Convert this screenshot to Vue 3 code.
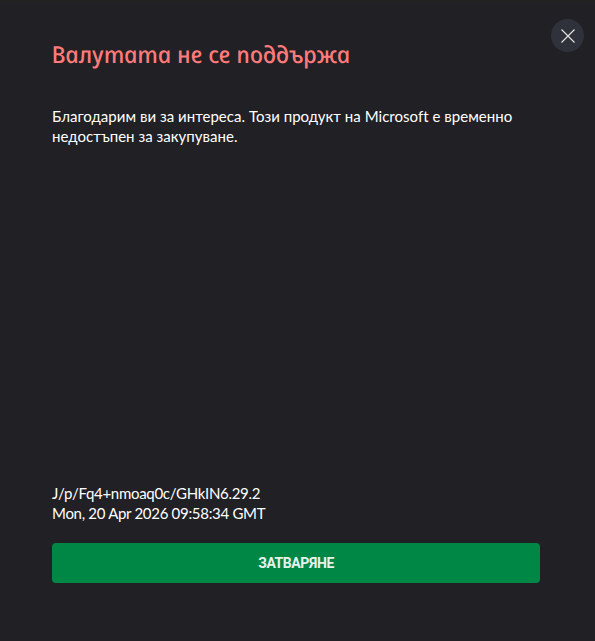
<script setup>
const title = 'Валутата не се поддържа'
</script>

<template>
  <div class="dialog" lang="bg">
    <button class="close" aria-label="Затваряне">
      <svg width="14" height="14" viewBox="0 0 14 14"><path d="M.5.5l13 13M13.5.5l-13 13" stroke="#e6e6e8" stroke-width="1.1" fill="none"/></svg>
    </button>
    <h1 class="title">{{ title }}</h1>
    <p class="message">Благодарим ви за интереса. Този продукт на Microsoft е временно недостъпен за закупуване.</p>
    <div class="trace">
      <div>J/p/Fq4+nmoaq0c/GHkIN6.29.2</div>
      <div>Mon, 20 Apr 2026 09:58:34 GMT</div>
    </div>
    <button class="action">ЗАТВАРЯНЕ</button>
  </div>
</template>

<style scoped>
.dialog {
  position: relative;
  box-sizing: border-box;
  height: 641px;
  padding: 37px 55px 58px 52px;
  display: flex;
  flex-direction: column;
  border-top: 3px solid #222223;
  background: #202025;
  color: #fff;
  font-family: "Lato", sans-serif;
  overflow: hidden;
}
.close {
  position: absolute;
  top: 16px;
  right: 11px;
  width: 33px;
  height: 33px;
  padding: 0;
  border: 0;
  border-radius: 50%;
  background: #2f323a;
  display: flex;
  align-items: center;
  justify-content: center;
}
.title {
  margin: 0 0 0 -1px;
  align-self: flex-start;
  color: #ff7b7b;
  font-family: "Noto Sans", sans-serif;
  font-size: 23.3px;
  line-height: 28px;
  font-weight: 500;
  font-style: italic;
  transform: skewX(12deg);
}
.message {
  margin: 38px 0 0;
  font-size: 15px;
  line-height: 20px;
  letter-spacing: 0.03px;
}
.trace {
  margin-top: auto;
  font-size: 15px;
  line-height: 20px;
  letter-spacing: -0.3px;
}
.action {
  margin-top: 20px;
  height: 40px;
  border: 0;
  border-radius: 4px;
  background: #008746;
  color: #e6f3ec;
  font-family: "Roboto", sans-serif;
  font-size: 14px;
  font-weight: 700;
  letter-spacing: -0.4px;
}
</style>
